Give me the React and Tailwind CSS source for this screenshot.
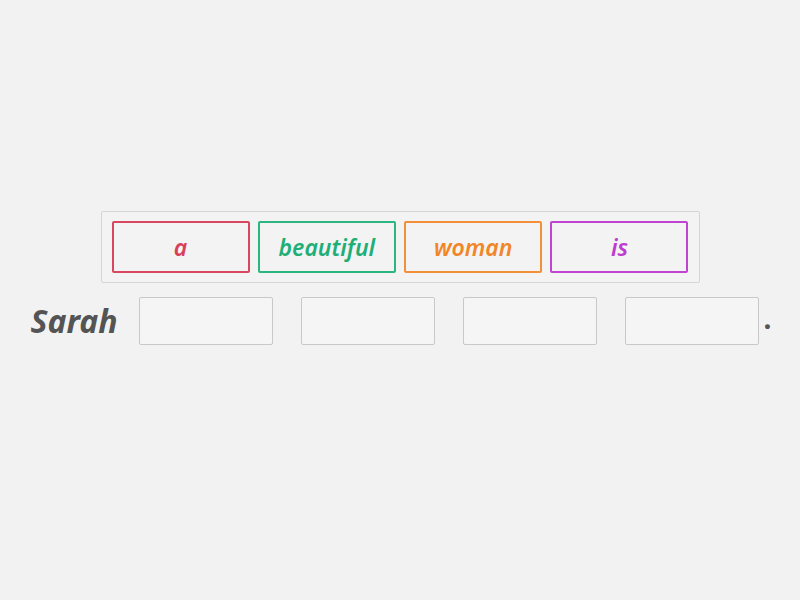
import React from 'react';

const tiles = [
  { word: 'a', cls: 'border-[#d8475f] text-[#d8405a]' },
  { word: 'beautiful', cls: 'border-[#2bb57f] text-[#1eae77]' },
  { word: 'woman', cls: 'border-[#f28f38] text-[#f08628]' },
  { word: 'is', cls: 'border-[#c043d2] text-[#bd3ccf]' },
];

function Tile({ word, cls }) {
  return (
    <div
      className={`w-[138px] h-[52px] border-2 rounded-[2px] flex items-center justify-center text-[23px] font-semibold italic ${cls}`}
    >
      {word}
    </div>
  );
}

function Slot() {
  return <div className="w-[134px] h-[48px] border border-[#c9c8c9] rounded-[2px] bg-[#f6f5f6]" />;
}

export default function App() {
  return (
    <div
      className="w-[800px] h-[600px] bg-[#f3f2f3] flex flex-col items-center pt-[211px]"
      style={{ fontFamily: '"Noto Sans", "Open Sans", sans-serif' }}
    >
      {/* word bank */}
      <div className="w-[599px] flex justify-between border border-[#d6d5d6] bg-[#f4f3f4] px-[10px] py-[9px] rounded-[2px]">
        {tiles.map((t) => (
          <Tile key={t.word} {...t} />
        ))}
      </div>

      {/* sentence */}
      <div className="flex items-center mt-[14px] pl-[2px]">
        <span className="text-[32px] font-bold italic text-[#555455] mr-[21px] leading-none">Sarah</span>
        <div className="flex gap-[28px]">
          <Slot />
          <Slot />
          <Slot />
          <Slot />
        </div>
        <span className="text-[28px] font-bold text-[#555455] ml-[5px] leading-none -mt-[6px]">.</span>
      </div>
    </div>
  );
}
